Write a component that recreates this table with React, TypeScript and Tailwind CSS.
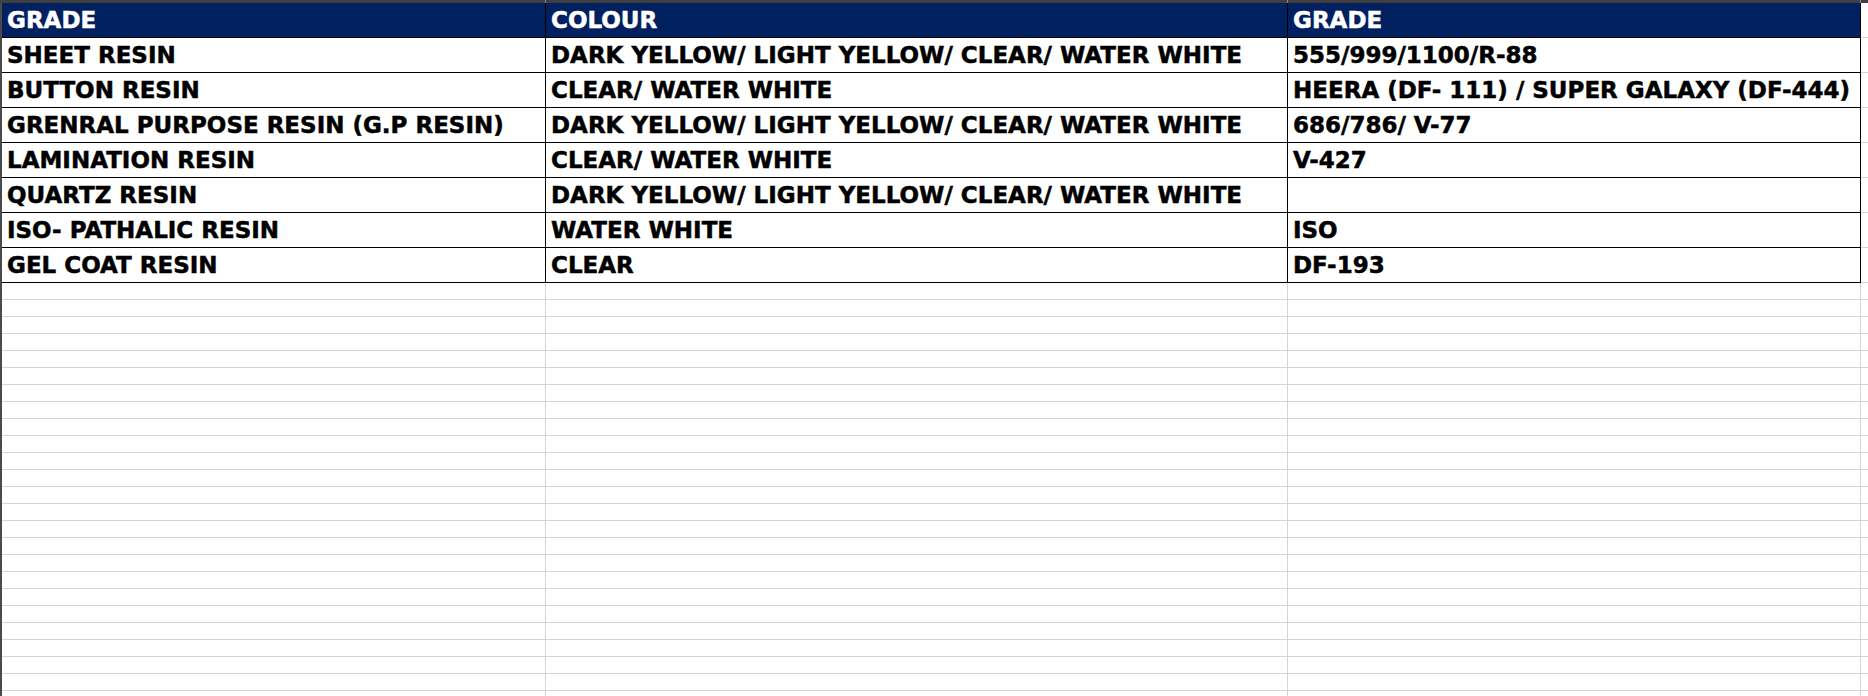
import React from 'react'

const rows: [string, string, string][] = [
  ['SHEET RESIN', 'DARK YELLOW/ LIGHT YELLOW/ CLEAR/ WATER WHITE', '555/999/1100/R-88'],
  ['BUTTON RESIN', 'CLEAR/ WATER WHITE', 'HEERA (DF- 111) / SUPER GALAXY (DF-444)'],
  ['GRENRAL PURPOSE RESIN (G.P RESIN)', 'DARK YELLOW/ LIGHT YELLOW/ CLEAR/ WATER WHITE', '686/786/ V-77'],
  ['LAMINATION RESIN', 'CLEAR/ WATER WHITE', 'V-427'],
  ['QUARTZ RESIN', 'DARK YELLOW/ LIGHT YELLOW/ CLEAR/ WATER WHITE', ''],
  ['ISO- PATHALIC RESIN', 'WATER WHITE', 'ISO'],
  ['GEL COAT RESIN', 'CLEAR', 'DF-193'],
]

const cols = 'grid grid-cols-[544px_742px_573px_1fr]'
const cell = 'flex items-center pl-[5px] border-r border-black whitespace-nowrap overflow-hidden'
const heavy = 'text-[23px] font-bold leading-none [-webkit-text-stroke:0.5px_currentColor]'

export default function App() {
  return (
    <div
      className="w-[1868px] h-[696px] bg-white overflow-hidden flex flex-col"
      style={{ fontFamily: '"DejaVu Sans", "Liberation Sans", sans-serif' }}
    >
      {/* sheet column-header edge */}
      <div className={`${cols} h-[3px] bg-[#3f3f3f] pl-[2px]`}>
        <div className="border-r border-[#8a8a8a]" />
        <div className="border-r border-[#8a8a8a]" />
        <div className="border-r border-[#8a8a8a]" />
        <div />
      </div>

      <div className="flex-1 border-l-2 border-[#4a4a4a] overflow-hidden">
        <div className={`${cols} h-[35px] ${heavy} text-white`}>
          <div className={`${cell} bg-[#002060] border-b`}>GRADE</div>
          <div className={`${cell} bg-[#002060] border-b`}>COLOUR</div>
          <div className={`${cell} bg-[#002060] border-b`}>GRADE</div>
          <div className="border-b border-[#d4d4d4]" />
        </div>

        {rows.map((r, i) => (
          <div key={i} className={`${cols} h-[35px] ${heavy} text-black`}>
            <div className={`${cell} border-b`}>{r[0]}</div>
            <div className={`${cell} border-b`}>{r[1]}</div>
            <div className={`${cell} border-b`}>{r[2]}</div>
            <div className="border-b border-[#d4d4d4]" />
          </div>
        ))}

        {Array.from({ length: 25 }).map((_, i) => (
          <div key={i} className={`${cols} h-[17px]`}>
            <div className="border-r border-b border-[#d4d4d4]" />
            <div className="border-r border-b border-[#d4d4d4]" />
            <div className="border-r border-b border-[#d4d4d4]" />
            <div className="border-b border-[#d4d4d4]" />
          </div>
        ))}
      </div>
    </div>
  )
}
